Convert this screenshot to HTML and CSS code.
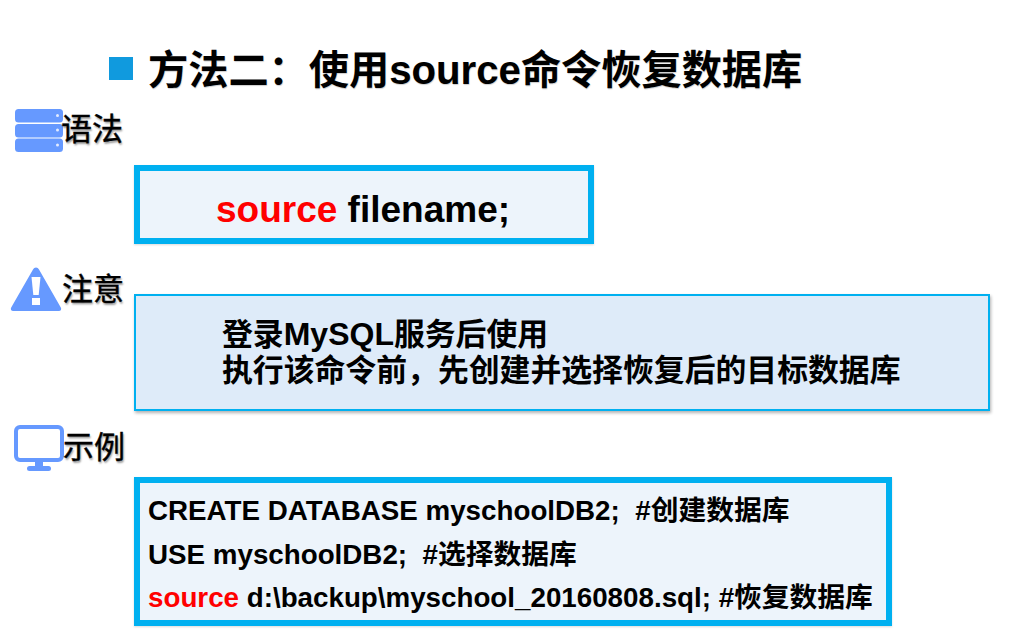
FILE: index.html
```html
<!DOCTYPE html>
<html lang="zh">
<head>
<meta charset="utf-8">
<title>方法二</title>
<link rel="stylesheet" href="styles.css">
</head>
<body>
<main class="slide">
  <h1 class="title"><span class="bullet"></span>方法二&#xFF1A;使用source命令恢复数据库</h1>

  <div class="label label-syntax">
    <svg class="icon" width="48" height="44" viewBox="0 0 48 44">
      <g fill="#6699ff">
        <rect x="0" y="0" width="48" height="13.5" rx="3.5"/>
        <rect x="0" y="15" width="48" height="13.5" rx="3.5"/>
        <rect x="0" y="29.5" width="48" height="13.5" rx="3.5"/>
      </g>
      <g fill="#e4ecff">
        <circle cx="42.5" cy="6.5" r="1.5"/>
        <circle cx="42.5" cy="21" r="1.5"/>
        <circle cx="42.5" cy="36" r="1.5"/>
      </g>
    </svg>
    <span class="label-text">语法</span>
  </div>
  <div class="box box-syntax"><span class="red">source</span> filename;</div>

  <div class="label label-note">
    <svg class="icon" width="52" height="46" viewBox="0 0 52 46">
      <path d="M26 1.5c1.3 0 2.3.7 3 2l21.800 38c1 1.900 0 3.500-2 3.500H3.200c-2 0-3-1.600-2-3.500L23 3.500c.7-1.300 1.700-2 3-2z" fill="#6699ff"/>
      <path d="M21.500 11h9l-1.800 18h-5.400z" fill="#fff"/>
      <rect x="22" y="32" width="8" height="7" fill="#fff"/>
    </svg>
    <span class="label-text">注意</span>
  </div>
  <div class="box box-note">
    <p>登录<span class="latin">MySQL</span>服务后使用</p>
    <p>执行该命令前&#xFF0C;先创建并选择恢复后的目标数据库</p>
  </div>

  <div class="label label-example">
    <svg class="icon" width="50" height="46" viewBox="0 0 50 46">
      <rect x="2" y="2" width="46" height="33" rx="4" fill="none" stroke="#6699ff" stroke-width="4"/>
      <rect x="21" y="37" width="8" height="5" fill="#6699ff"/>
      <rect x="13" y="41" width="24" height="5" rx="2.500" fill="#6699ff"/>
    </svg>
    <span class="label-text">示例</span>
  </div>
  <div class="box box-example">
    <p>CREATE DATABASE myschoolDB2; &nbsp;#创建数据库</p>
    <p>USE myschoolDB2; &nbsp;#选择数据库</p>
    <p><span class="red">source</span> d:\backup\myschool_20160808.sql; #恢复数据库</p>
  </div>
</main>
</body>
</html>
```

FILE: styles.css
```css
html, body {
  margin: 0;
  padding: 0;
  background: #fff;
}
.slide {
  width: 1028px;
  height: 631px;
  overflow: hidden;
  font-family: "Liberation Sans", "Noto Sans CJK SC", sans-serif;
  color: #000;
  display: flex;
  flex-direction: column;
  align-items: flex-start;
}
.title {
  margin: 47px 0 0 109px;
  display: flex;
  align-items: center;
  font-size: 40.200px;
  line-height: 48px;
  font-weight: 700;
  white-space: nowrap;
  text-shadow: 0.5px 0.5px 1px rgba(0, 0, 0, 0.2);
}
.bullet {
  width: 24px;
  height: 23px;
  margin: 0 15px 6px 0;
  background: #109ade;
}
.label {
  display: flex;
  align-items: flex-start;
}
.icon {
  flex: none;
  display: block;
}
.label-text {
  font-size: 31px;
  line-height: 36px;
  -webkit-text-stroke: 0.4px #000;
  text-shadow: 1px 2px 2px rgba(0, 0, 0, 0.4);
}
.label-syntax {
  margin: 14px 0 0 15px;
}
.label-syntax .label-text {
  margin: 3px 0 0 -2px;
}
.label-note {
  margin: 22px 0 0 10px;
  height: 28px;
}
.label-note .label-text {
  margin-top: 6px;
  margin-left: 0;
}
.label-example {
  margin: 14px 0 0 14px;
}
.label-example .label-text {
  margin-top: 5px;
  margin-left: -1px;
}
.box {
  margin-left: 134px;
  box-sizing: border-box;
  background: #edf4fb;
  border: 6px solid #00b0f0;
  font-weight: 700;
  box-shadow: 0 1px 2px rgba(0, 0, 0, 0.15);
}
.box p {
  margin: 0;
  white-space: nowrap;
}
.red {
  color: #ff0000;
}
.latin {
  font-size: 32px;
}
.box-syntax {
  width: 460px;
  height: 79px;
  margin-top: 12px;
  padding: 18px 2px 0 0;
  font-size: 37px;
  line-height: 42px;
  text-align: center;
}
.box-note {
  width: 856px;
  height: 117px;
  margin-top: 0;
  padding: 20px 0 0 86px;
  border-width: 2px;
  background: #deebf9;
  font-size: 30.850px;
  line-height: 36px;
  box-shadow: 1px 2px 3px rgba(0, 0, 0, 0.3);
}
.box-example {
  width: 758px;
  height: 149px;
  margin-top: 6px;
  padding: 6px 0 0 8px;
  font-size: 27.750px;
  line-height: 43.500px;
}
```
